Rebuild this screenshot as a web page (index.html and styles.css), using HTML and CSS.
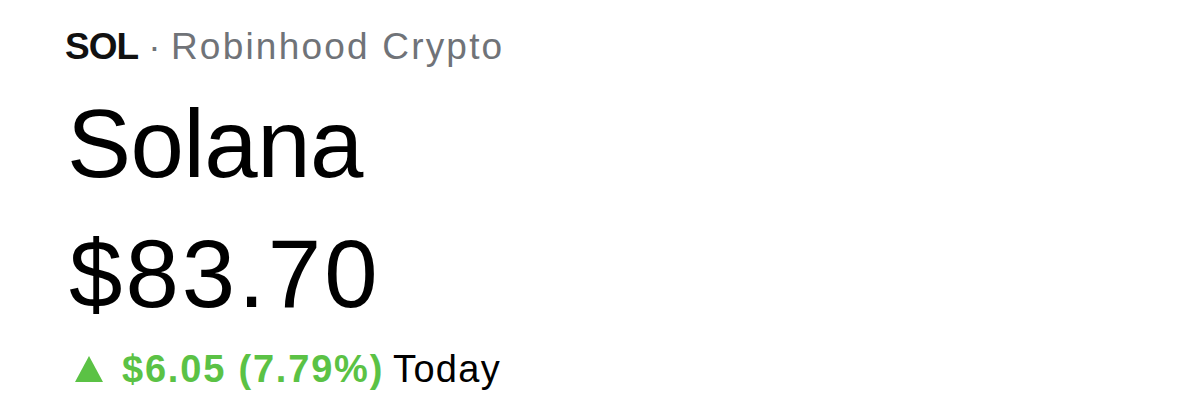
FILE: index.html
```html
<!DOCTYPE html>
<html lang="en">
<head>
<meta charset="utf-8">
<title>Solana</title>
<link rel="stylesheet" href="styles.css">
</head>
<body>
<main class="quote">
  <div class="source"><span class="ticker">SOL</span><span class="sep"> · </span><span class="exchange">Robinhood Crypto</span></div>
  <h1 class="name">Solana</h1>
  <div class="price">$83.70</div>
  <div class="change">
    <svg class="arrow" width="28" height="26" viewBox="0 0 28 26" aria-hidden="true"><polygon points="14,0 28,26 0,26" fill="#5bc245"/></svg>
    <span class="delta">$6.05 (7.79%)</span>
    <span class="period">Today</span>
  </div>
</main>
</body>
</html>
```
FILE: styles.css
```css
html, body {
  margin: 0;
  padding: 0;
  background: #ffffff;
}
body {
  font-family: "Liberation Sans", Arial, sans-serif;
  color: #000000;
}
.quote {
  padding: 23px 0 0 65px;
  display: flex;
  flex-direction: column;
  align-items: flex-start;
}
.source {
  font-size: 37px;
  line-height: 48px;
  height: 48px;
  white-space: nowrap;
}
.ticker {
  font-weight: bold;
  color: #111111;
  letter-spacing: -1px;
}
.sep {
  color: #707378;
}
.exchange {
  color: #707378;
  letter-spacing: 2.2px;
}
.name {
  margin: 18px 0 0 0;
  padding-left: 2px;
  font-size: 96px;
  font-weight: normal;
  line-height: 110px;
  height: 110px;
  letter-spacing: -0.5px;
}
.price {
  margin-top: 20px;
  padding-left: 4px;
  font-size: 96px;
  line-height: 110px;
  height: 110px;
  letter-spacing: 3px;
}
.change {
  margin-top: 16px;
  display: flex;
  align-items: center;
  font-size: 38px;
  line-height: 48px;
  height: 48px;
  white-space: nowrap;
}
.arrow {
  margin: 0 19px 0 10px;
  display: block;
}
.delta {
  color: #5bc245;
  font-weight: bold;
  letter-spacing: 1.8px;
  margin-right: 9px;
}
.period {
  color: #000000;
  letter-spacing: 1.3px;
}
```
